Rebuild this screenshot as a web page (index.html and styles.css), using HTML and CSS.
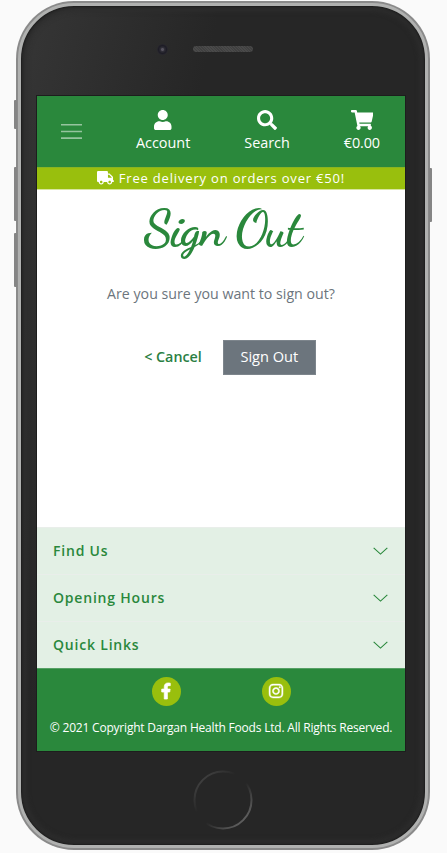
FILE: index.html
```html
<!DOCTYPE html>
<html lang="en">
<head>
<meta charset="utf-8">
<title>Sign Out</title>
<link rel="stylesheet" href="styles.css">
</head>
<body>
<div class="phone">
  <span class="key key-mute"></span>
  <span class="key key-up"></span>
  <span class="key key-down"></span>
  <span class="key key-power"></span>
  <div class="bezel">
    <span class="camera"></span>
    <span class="speaker"></span>
    <div class="screen">
      <header class="header">
        <svg class="menu" viewBox="0 0 22 18"><path d="M0 2.500h22M0 9.500h22M0 16.500h22"/></svg>
        <a class="nav-item"><svg viewBox="0 0 448 512"><path d="M224 256c70.7 0 128-57.3 128-128S294.7 0 224 0 96 57.3 96 128s57.3 128 128 128zm89.6 32h-16.700c-22.200 10.200-46.900 16-72.900 16s-50.600-5.800-72.900-16h-16.700C60.200 288 0 348.200 0 422.400V464c0 26.500 21.500 48 48 48h352c26.500 0 48-21.500 48-48v-41.600c0-74.200-60.200-134.400-134.400-134.400z"/></svg><span>Account</span></a>
        <a class="nav-item"><svg viewBox="0 0 512 512"><path d="M505 442.700L405.300 343c-4.500-4.500-10.600-7-17-7H372c27.600-35.300 44-79.700 44-128C416 93.100 322.900 0 208 0S0 93.100 0 208s93.100 208 208 208c48.300 0 92.700-16.400 128-44v16.300c0 6.400 2.500 12.500 7 17l99.700 99.700c9.400 9.400 24.600 9.400 33.900 0l28.300-28.300c9.400-9.400 9.400-24.600.1-34zM208 336c-70.700 0-128-57.200-128-128 0-70.700 57.200-128 128-128 70.700 0 128 57.200 128 128 0 70.700-57.200 128-128 128z"/></svg><span>Search</span></a>
        <a class="nav-item"><svg viewBox="0 0 576 512"><path d="M528.120 301.319l47.273-208C578.806 78.301 567.391 64 551.990 64H159.208l-9.166-44.810C147.758 8.021 137.930 0 126.529 0H24C10.745 0 0 10.745 0 24v16c0 13.255 10.745 24 24 24h69.883l70.248 343.435C147.325 417.100 136 435.222 136 456c0 30.928 25.072 56 56 56s56-25.072 56-56c0-15.674-6.447-29.835-16.824-40h209.647C430.447 426.165 424 440.326 424 456c0 30.928 25.072 56 56 56s56-25.072 56-56c0-22.172-12.888-41.332-31.579-50.405l5.517-24.276c3.413-15.018-8.002-29.319-23.403-29.319H218.117l-6.545-32h293.145c11.206 0 20.920-7.754 23.403-18.681z"/></svg><span>€0.00</span></a>
      </header>
      <div class="banner"><svg viewBox="0 0 640 512"><path d="M624 352h-16V243.900c0-12.700-5.100-24.900-14.100-33.900L494 110.100c-9-9-21.200-14.100-33.900-14.100H416V48c0-26.500-21.500-48-48-48H48C21.500 0 0 21.500 0 48v320c0 26.500 21.500 48 48 48h16c0 53 43 96 96 96s96-43 96-96h128c0 53 43 96 96 96s96-43 96-96h48c8.800 0 16-7.200 16-16v-32c0-8.800-7.200-16-16-16zM160 464c-26.500 0-48-21.500-48-48s21.500-48 48-48 48 21.500 48 48-21.500 48-48 48zm320 0c-26.500 0-48-21.500-48-48s21.500-48 48-48 48 21.500 48 48-21.500 48-48 48zm80-208H416V144h44.100l99.900 99.900V256z"/></svg><span>Free delivery on orders over €50!</span></div>
      <main class="main">
        <h1 class="title">Sign Out</h1>
        <p class="question">Are you sure you want to sign out?</p>
        <div class="actions"><a class="cancel">&lt; Cancel</a><button class="submit">Sign Out</button></div>
      </main>
      <div class="accordion">
        <div class="row"><span>Find Us</span><svg viewBox="0 0 16 8"><path d="M.7.7 8 7.300 15.300.7"/></svg></div>
        <div class="row"><span>Opening Hours</span><svg viewBox="0 0 16 8"><path d="M.7.7 8 7.300 15.300.7"/></svg></div>
        <div class="row"><span>Quick Links</span><svg viewBox="0 0 16 8"><path d="M.7.7 8 7.300 15.300.7"/></svg></div>
      </div>
      <footer class="footer">
        <div class="social">
          <a class="disc"><svg viewBox="0 0 320 512"><path stroke="#fff" stroke-width="24" d="M279.140 288l14.220-92.660h-88.910v-60.130c0-25.350 12.420-50.060 52.240-50.060h40.420V6.260S260.430 0 225.360 0c-73.220 0-121.080 44.380-121.080 124.720v70.620H22.890V288h81.390v224h100.170V288z"/></svg></a>
          <a class="disc"><svg viewBox="0 0 448 512"><path stroke="#fff" stroke-width="14" d="M224.100 141c-63.600 0-114.900 51.300-114.900 114.900s51.300 114.900 114.900 114.900S339 319.500 339 255.900 287.700 141 224.100 141zm0 189.600c-41.100 0-74.700-33.500-74.700-74.700s33.500-74.700 74.700-74.700 74.700 33.500 74.700 74.700-33.600 74.700-74.700 74.700zm146.400-194.300c0 14.900-12 26.800-26.800 26.800-14.900 0-26.800-12-26.800-26.800s12-26.800 26.800-26.800 26.800 12 26.800 26.800zm76.100 27.200c-1.700-35.900-9.900-67.700-36.200-93.900-26.200-26.200-58-34.400-93.900-36.200-37-2.100-147.900-2.100-184.900 0-35.800 1.700-67.600 9.900-93.900 36.100s-34.400 58-36.200 93.900c-2.100 37-2.100 147.900 0 184.900 1.700 35.900 9.900 67.700 36.200 93.900s58 34.400 93.900 36.200c37 2.100 147.900 2.100 184.900 0 35.900-1.700 67.700-9.900 93.900-36.200 26.200-26.200 34.400-58 36.200-93.900 2.100-37 2.100-147.800 0-184.800zM398.800 388c-7.800 19.600-22.900 34.700-42.600 42.600-29.500 11.700-99.500 9-132.100 9s-102.700 2.600-132.100-9c-19.600-7.800-34.700-22.900-42.600-42.600-11.700-29.500-9-99.500-9-132.100s-2.600-102.700 9-132.100c7.800-19.600 22.900-34.700 42.600-42.600 29.500-11.700 99.500-9 132.100-9s102.700-2.600 132.100 9c19.600 7.800 34.700 22.900 42.600 42.600 11.700 29.500 9 99.500 9 132.100s2.700 102.700-9 132.100z"/></svg></a>
        </div>
        <p class="copyright">© 2021 Copyright Dargan Health Foods Ltd. All Rights Reserved.</p>
      </footer>
    </div>
    <svg class="home" viewBox="0 0 60 60"><defs><linearGradient id="ring" x1="0" y1="0" x2="1" y2="1"><stop offset="0" stop-color="#4c4c4c"/><stop offset=".38" stop-color="#262626"/><stop offset=".55" stop-color="#262626"/><stop offset="1" stop-color="#777"/></linearGradient></defs><circle cx="30" cy="30" r="28.500"/></svg>
  </div>
</div>
</body>
</html>
```
FILE: styles.css
```css
* { box-sizing: border-box; }
body {
  margin: 0;
  height: 853px;
  overflow: hidden;
  background: #fafafa;
  font-family: "Open Sans", "Noto Sans", sans-serif;
}
.phone {
  position: relative;
  width: 414px;
  height: 849px;
  margin: 1px 0 0 16px;
  padding: 2px;
  border-radius: 58px;
  background: #8a8a8a;
}
.bezel {
  position: relative;
  height: 845px;
  padding: 90px 16px 0;
  border: 3px solid #b0b1b0;
  border-radius: 56px;
  background: linear-gradient(105deg, #363636 0, #262626 32%);
  box-shadow: inset 0 0 2px 1px #1c1c1c, inset 0 0 5px 5px #2d2d2d;
}
.key { position: absolute; width: 3px; background: #858585; border-radius: 1px; }
.key-mute { left: -2px; top: 99px; height: 29px; }
.key-up { left: -2px; top: 166px; height: 54px; }
.key-down { left: -2px; top: 232px; height: 54px; }
.key-power { right: -2px; top: 167px; height: 54px; }
.camera {
  position: absolute;
  left: 136px;
  top: 38px;
  width: 11px;
  height: 11px;
  border-radius: 50%;
  background: radial-gradient(circle, #56535e 0 1px, #302f38 2px, #1d1c25 4px, #29282e 5.5px);
}
.speaker {
  position: absolute;
  left: 172px;
  top: 40px;
  width: 60px;
  height: 6px;
  border-radius: 3px;
  background: repeating-linear-gradient(45deg, #4a4a4a 0 1px, #404040 1px 2px);
}
.screen {
  display: flex;
  flex-direction: column;
  width: 368px;
  height: 655px;
  background: #fff;
  box-shadow: 0 0 0 1px #1d1d1d;
}
.header {
  display: flex;
  justify-content: space-between;
  height: 71px;
  padding: 14px 25px 0 24px;
  background: #2a883c;
  color: #fff;
}
.menu { width: 21px; height: 18px; margin-top: 12px; fill: none; stroke: #95c49e; stroke-width: 1.7; }
.nav-item { display: flex; flex-direction: column; align-items: center; font-size: 14.4px; line-height: 20px; }
.nav-item svg { height: 20px; fill: #fff; }
.nav-item span { margin-top: 3px; white-space: nowrap; }
.nav-item:last-child span { letter-spacing: -.1px; }
.banner {
  display: flex;
  align-items: center;
  justify-content: center;
  gap: 5px;
  height: 23px;
  border-top: 1px solid #89b421;
  border-bottom: 1px solid #d8e69f;
  background: #99bf0d;
  color: #fff;
  font-size: 13px;
  letter-spacing: .82px;
  white-space: nowrap;
}
.banner svg { height: 13.5px; margin-top: -1px; fill: #fff; }
.banner span { margin-top: -1px; }
.main { flex: 1; display: flex; flex-direction: column; align-items: center; }
.title {
  margin: 11px 0 0;
  padding-left: 2px;
  color: #2a883c;
  font: 700 51px/56px "Dancing Script", "Liberation Serif", cursive;
  letter-spacing: -1.6px;
  white-space: nowrap;
}
.question { margin: 27px 0 0; color: #6c757d; font-size: 14.2px; line-height: 20px; }
.actions { display: flex; align-items: center; gap: 21px; margin: 36px 0 0 18px; }
.cancel { margin-top: -2px; color: #2a7f43; font-size: 14.3px; font-weight: 600; }
.submit {
  width: 93px;
  height: 35px;
  padding: 0 0 3px;
  border: 1px solid #7d858c;
  background: #6c757d;
  color: #fff;
  font: 14.6px "Open Sans", sans-serif;
}
.row {
  display: flex;
  align-items: center;
  justify-content: space-between;
  height: 47px;
  padding: 0 17px 0 16px;
  border-top: 1px solid #e9eeea;
  background: #e3f0e5;
  color: #2a883c;
  font-size: 14px;
  font-weight: 600;
  letter-spacing: .8px;
}
.row span { margin-top: -2px; }
.row svg { width: 15px; height: 8px; fill: none; stroke: #2a883c; stroke-width: 1.2; }
.footer { height: 83px; border-top: 1px solid #56a065; background: #2a883c; color: #fff; }
.social { display: flex; justify-content: center; gap: 81px; padding-top: 8px; }
.disc { display: flex; align-items: center; justify-content: center; width: 29px; height: 29px; border-radius: 50%; background: #99bf0d; }
.disc svg { height: 16px; margin-top: -1px; fill: #fff; overflow: visible; }
.copyright { margin: 13px 0 0; text-align: center; font-size: 12px; line-height: 18px; letter-spacing: -.2px; white-space: nowrap; }
.home { position: absolute; left: 172px; top: 764px; width: 60px; height: 60px; fill: none; }
.home circle { stroke: url(#ring); stroke-width: 2; }
```
